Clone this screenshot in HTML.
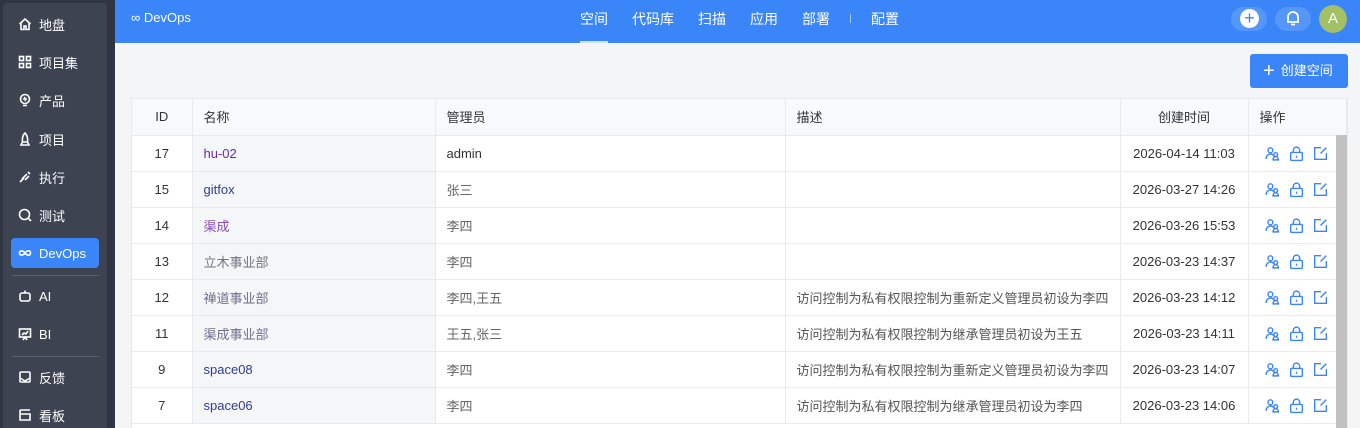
<!DOCTYPE html>
<html style="width:1360px;height:428px;overflow:hidden"><head><meta charset="utf-8"><style>
*{box-sizing:border-box;margin:0;padding:0}
body{width:1360px;height:428px;overflow:hidden;background:#f4f5f7;font-family:"Liberation Sans","Noto Sans CJK SC",sans-serif;font-size:13px;color:#333;position:relative}
#sb{position:absolute;left:0;top:0;width:115px;height:428px;background:#2f3542;overflow:hidden}
#sbi{position:absolute;left:3px;top:3px;width:104px;height:430px;background:#3d4351;border-radius:4px}
.it{position:absolute;left:11px;width:88px;height:30px;color:#fff;font-size:13px;display:flex;align-items:center;padding-left:7px;border-radius:4px}
.it svg{width:14px;height:14px;margin-right:7px;stroke:#fff;fill:none;stroke-width:1.6}
.it.act{background:#3a85f8}
.sep{position:absolute;left:11px;width:88px;height:1px;background:#575d6b}
#hd{position:absolute;left:115px;top:0;right:0;height:43px;background:#3a85f8;color:#fff}
.nav{position:absolute;top:9px;font-size:14px;color:#fff}
#tb{position:absolute;left:131px;top:98px;width:1217px;background:#fff;border:1px solid #e8eaee;height:340px;overflow:hidden}
table{border-collapse:collapse;width:100%;table-layout:fixed}
td,th{height:36px;border-bottom:1px solid #e8eaee;border-right:1px solid #e8eaee;padding:0 11px;font-weight:normal;text-align:left;white-space:nowrap;overflow:hidden;font-size:13px}
th{background:#f8f9fb;color:#333}
td.c2{background:#f5f6f8}
.ce{text-align:center}
.ic{padding-left:15px}
.ic svg{width:17px;height:17px;stroke:#3a85f8;fill:none;stroke-width:1.3;margin-right:7px;vertical-align:middle}
</style></head><body>
<div id="sb"><div id="sbi"></div>
<div class="it" style="top:9px"><svg viewBox="0 0 14 14"><path d="M1.5 7L7 2l5.5 5M3 6v6.5h3V9h2v3.5h3V6"/></svg>地盘</div>
<div class="it" style="top:47px"><svg viewBox="0 0 14 14"><rect x="1.5" y="1.5" width="4" height="4"/><rect x="8.5" y="1.5" width="4" height="4"/><rect x="1.5" y="8.5" width="4" height="4"/><rect x="8.5" y="8.5" width="4" height="4"/></svg>项目集</div>
<div class="it" style="top:85px"><svg viewBox="0 0 14 14"><circle cx="7" cy="6" r="4.5"/><path d="M5 12.5h4M7 4l-1 2h2l-1 2"/></svg>产品</div>
<div class="it" style="top:124px"><svg viewBox="0 0 14 14"><path d="M7 1c2 2 3 5 2.5 9h-5C4 6 5 3 7 1zM4.5 10L3 13h8l-1.5-3"/></svg>项目</div>
<div class="it" style="top:162px"><svg viewBox="0 0 14 14"><path d="M2 12l4-4M4 9l5-5M10 2l2 2M7 10l4-4"/></svg>执行</div>
<div class="it" style="top:200px"><svg viewBox="0 0 14 14"><circle cx="6.5" cy="6.5" r="5"/><path d="M10 10l3 3"/></svg>测试</div>
<div class="it act" style="top:238px"><svg viewBox="0 0 14 14"><path d="M7 7C5 4 1.5 4.5 1.5 7S5 10 7 7s5.5-3 5.5 0S9 10 7 7z"/></svg>DevOps</div>
<div class="sep" style="top:275px"></div>
<div class="it" style="top:281px"><svg viewBox="0 0 14 14"><rect x="2" y="4" width="10" height="8" rx="2"/><path d="M7 1.5V4M5 8h0M9 8h0"/></svg>AI</div>
<div class="it" style="top:319px"><svg viewBox="0 0 14 14"><rect x="1.5" y="2" width="11" height="8"/><path d="M4 8l2-2 2 1 2-3M5 13l2-3 2 3"/></svg>BI</div>
<div class="sep" style="top:356px"></div>
<div class="it" style="top:362px"><svg viewBox="0 0 14 14"><rect x="2" y="2" width="10" height="10" rx="1"/><path d="M2 8l5 3 5-3"/></svg>反馈</div>
<div class="it" style="top:400px"><svg viewBox="0 0 14 14"><path d="M2 2h10M2 6h10v6H2zM2 2v10"/></svg>看板</div>
</div>
<div id="hd">
<div style="position:absolute;left:16px;top:10px;font-size:13px">∞ DevOps</div>
<div class="nav" style="left:465px">空间</div>
<div style="position:absolute;left:465px;top:41px;width:28px;height:2px;background:#cfe0fb"></div>
<div class="nav" style="left:517px">代码库</div>
<div class="nav" style="left:583px">扫描</div>
<div class="nav" style="left:635px">应用</div>
<div class="nav" style="left:687px">部署</div>
<div style="position:absolute;left:735px;top:14px;width:1px;height:9px;background:#a9c8fb"></div>
<div class="nav" style="left:756px">配置</div>
<div style="position:absolute;left:1116px;top:7px;width:36px;height:24px;border-radius:12px;background:#5597f9"></div>
<div style="position:absolute;left:1125px;top:9px;width:19px;height:19px;border-radius:50%;background:#fff;color:#3a85f8;text-align:center;font-size:18px;line-height:18px">+</div>
<div style="position:absolute;left:1160px;top:7px;width:36px;height:24px;border-radius:12px;background:#5597f9"></div>
<svg style="position:absolute;left:1170px;top:9px" width="16" height="18" viewBox="0 0 16 18" fill="none" stroke="#fff" stroke-width="1.8"><path d="M3 13V8a5 5 0 0 1 10 0v5H2h12M6 15.5h4"/></svg>
<div style="position:absolute;left:1204px;top:5px;width:28px;height:28px;border-radius:50%;background:#a3c064;color:#fff;text-align:center;line-height:28px;font-size:15px">A</div>
</div>
<div style="position:absolute;left:1250px;top:54px;width:98px;height:34px;background:#3a85f8;border-radius:3px;color:#fff;font-size:13px;line-height:34px;padding-left:13px"><span style="font-size:20px;vertical-align:-2px;margin-right:6px">+</span>创建空间</div>
<div id="tb"><table>
<colgroup><col style="width:60px"><col style="width:243px"><col style="width:350px"><col style="width:335px"><col style="width:128px"><col></colgroup>
<tr><th class="ce">ID</th><th>名称</th><th>管理员</th><th>描述</th><th class="ce">创建时间</th><th>操作</th></tr>
<tr><td class="ce">17</td><td class="c2" style="color:#6a2aa8">hu-02</td><td>admin</td><td></td><td class="ce">2026-04-14 11:03</td><td class="ic"></td></tr>
<tr><td class="ce">15</td><td class="c2" style="color:#2f3c92">gitfox</td><td style="color:#666">张三</td><td></td><td class="ce">2026-03-27 14:26</td><td class="ic"></td></tr>
<tr><td class="ce">14</td><td class="c2" style="color:#8a4db3">渠成</td><td style="color:#666">李四</td><td></td><td class="ce">2026-03-26 15:53</td><td class="ic"></td></tr>
<tr><td class="ce">13</td><td class="c2" style="color:#707385">立木事业部</td><td style="color:#666">李四</td><td></td><td class="ce">2026-03-23 14:37</td><td class="ic"></td></tr>
<tr><td class="ce">12</td><td class="c2" style="color:#6e6f90">禅道事业部</td><td style="color:#666">李四,王五</td><td style="color:#555">访问控制为私有权限控制为重新定义管理员初设为李四</td><td class="ce">2026-03-23 14:12</td><td class="ic"></td></tr>
<tr><td class="ce">11</td><td class="c2" style="color:#6e6f90">渠成事业部</td><td style="color:#666">王五,张三</td><td style="color:#555">访问控制为私有权限控制为继承管理员初设为王五</td><td class="ce">2026-03-23 14:11</td><td class="ic"></td></tr>
<tr><td class="ce">9</td><td class="c2" style="color:#2f3c92">space08</td><td style="color:#666">李四</td><td style="color:#555">访问控制为私有权限控制为重新定义管理员初设为李四</td><td class="ce">2026-03-23 14:07</td><td class="ic"></td></tr>
<tr><td class="ce">7</td><td class="c2" style="color:#2f3c92">space06</td><td style="color:#666">李四</td><td style="color:#555">访问控制为私有权限控制为继承管理员初设为李四</td><td class="ce">2026-03-23 14:06</td><td class="ic"></td></tr>
</table></div>
<div style="position:absolute;left:1336px;top:135px;width:11px;height:293px;background:#c1c1c1"></div>
<script>
var ic='<svg viewBox="0 0 16 16"><circle cx="6" cy="5" r="2.3"/><path d="M2 13c0-3 2-4.5 4-4.5s3 1 3.5 2"/><circle cx="11" cy="9" r="1.8"/><path d="M8.5 14c0-2 1.2-3 2.5-3s2.5 1 2.5 3z"/></svg><svg viewBox="0 0 16 16"><rect x="2.5" y="7" width="11" height="7.5" rx="1"/><path d="M5 7V5a3 3 0 0 1 6 0v2M8 10v2"/></svg><svg viewBox="0 0 16 16"><path d="M13.5 7.5v6h-11v-11h6M13.5 2.5L8 8"/></svg>';
document.querySelectorAll('td.ic').forEach(function(t){t.innerHTML=ic;});
</script>
</body></html>
